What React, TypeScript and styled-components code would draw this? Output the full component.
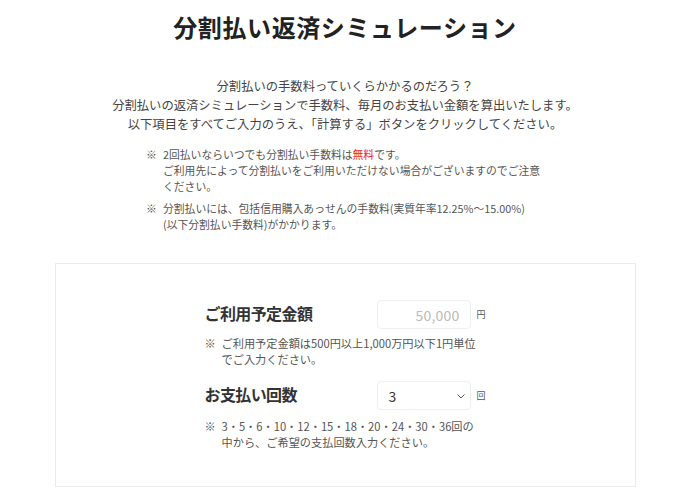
import React from "react";
import styled, { createGlobalStyle } from "styled-components";

const Global = createGlobalStyle`
  html, body { margin: 0; padding: 0; background: #fff; }
  body {
    font-family: "Noto Sans CJK JP", "Noto Sans", sans-serif;
    color: #333;
  }
  * { box-sizing: border-box; }
`;

const Page = styled.div`
  width: 690px;
  display: flex;
  flex-direction: column;
  align-items: center;
`;

const Title = styled.h1`
  margin: 9px 0 0;
  font-size: 24px;
  line-height: 36px;
  font-weight: 700;
  letter-spacing: 0.6px;
  color: #222;
`;

const Intro = styled.p`
  margin: 32px 0 0;
  font-size: 12.3px;
  line-height: 19px;
  color: #444;
  text-align: center;
`;

const NoteList = styled.ul`
  list-style: none;
  margin: 12px 0 0;
  padding: 0;
  width: 398px;
  display: flex;
  flex-direction: column;
  gap: 6px;
  align-self: flex-start;
  margin-left: 146px;
`;

const NoteItem = styled.li<{ $size?: number }>`
  display: flex;
  font-size: ${(p) => p.$size ?? 10.8}px;
  line-height: 16px;
  color: #555;
`;

const Mark = styled.span<{ $w?: number }>`
  flex: 0 0 ${(p) => p.$w ?? 17}px;
`;

const Red = styled.span`
  color: #e8262a;
`;

const Card = styled.section`
  margin-top: 31px;
  width: 581px;
  border: 1px solid #ebebeb;
  padding: 36px 0 36px 149px;
  display: flex;
  flex-direction: column;
`;

const Row = styled.div<{ $top?: number }>`
  display: flex;
  align-items: center;
  margin-top: ${(p) => p.$top ?? 0}px;
`;

const Label = styled.div`
  width: 172px;
  font-size: 16px;
  line-height: 24px;
  font-weight: 700;
  letter-spacing: -0.6px;
  color: #333;
  padding-bottom: 3px;
`;

const Field = styled.div`
  position: relative;
  width: 94px;
  height: 29px;
  border: 1px solid #efefef;
  border-radius: 4px;
  display: flex;
  align-items: center;
  font-size: 14px;
`;

const Placeholder = styled.span`
  flex: 1;
  text-align: right;
  padding-right: 10px;
  color: #bbb;
  letter-spacing: 0.2px;
`;

const Value = styled.span`
  flex: 1;
  padding-left: 11px;
  color: #333;
`;

const Chevron = styled.svg`
  position: absolute;
  right: 4px;
  top: 11px;
`;

const Unit = styled.span`
  margin-left: 6px;
  font-size: 9px;
  color: #555;
`;

const CardNote = styled.div<{ $top?: number }>`
  margin-top: ${(p) => p.$top ?? 6}px;
  width: 300px;
`;

export default function App() {
  return (
    <>
      <Global />
      <Page>
        <Title>分割払い返済シミュレーション</Title>
        <Intro>
          分割払いの手数料っていくらかかるのだろう？
          <br />
          分割払いの返済シミュレーションで手数料、毎月のお支払い金額を算出いたします。
          <br />
          以下項目をすべてご入力のうえ、「計算する」ボタンをクリックしてください。
        </Intro>
        <NoteList>
          <NoteItem>
            <Mark>※</Mark>
            <span>
              2回払いならいつでも分割払い手数料は<Red>無料</Red>です。
              <br />
              ご利用先によって分割払いをご利用いただけない場合がございますのでご注意ください。
            </span>
          </NoteItem>
          <NoteItem>
            <Mark>※</Mark>
            <span>
              分割払いには、包括信用購入あっせんの手数料(実質年率12.25%～15.00%)
              <br />
              (以下分割払い手数料)がかかります。
            </span>
          </NoteItem>
        </NoteList>
        <Card>
          <Row>
            <Label>ご利用予定金額</Label>
            <Field>
              <Placeholder>50,000</Placeholder>
            </Field>
            <Unit>円</Unit>
          </Row>
          <CardNote>
            <NoteItem $size={11.2}>
              <Mark>※</Mark>
              <span>
                ご利用予定金額は500円以上1,000万円以下1円単位
                <br />
                でご入力ください。
              </span>
            </NoteItem>
          </CardNote>
          <Row $top={14}>
            <Label>お支払い回数</Label>
            <Field>
              <Value>3</Value>
              <Chevron width="10" height="7" viewBox="0 0 10 7">
                <path d="M1.5 1.5 L5 5 L8.5 1.5" fill="none" stroke="#555" strokeWidth="1" />
              </Chevron>
            </Field>
            <Unit>回</Unit>
          </Row>
          <CardNote $top={8}>
            <NoteItem $size={11.2}>
              <Mark>※</Mark>
              <span>
                3・5・6・10・12・15・18・20・24・30・36回の
                <br />
                中から、ご希望の支払回数入力ください。
              </span>
            </NoteItem>
          </CardNote>
        </Card>
      </Page>
    </>
  );
}
